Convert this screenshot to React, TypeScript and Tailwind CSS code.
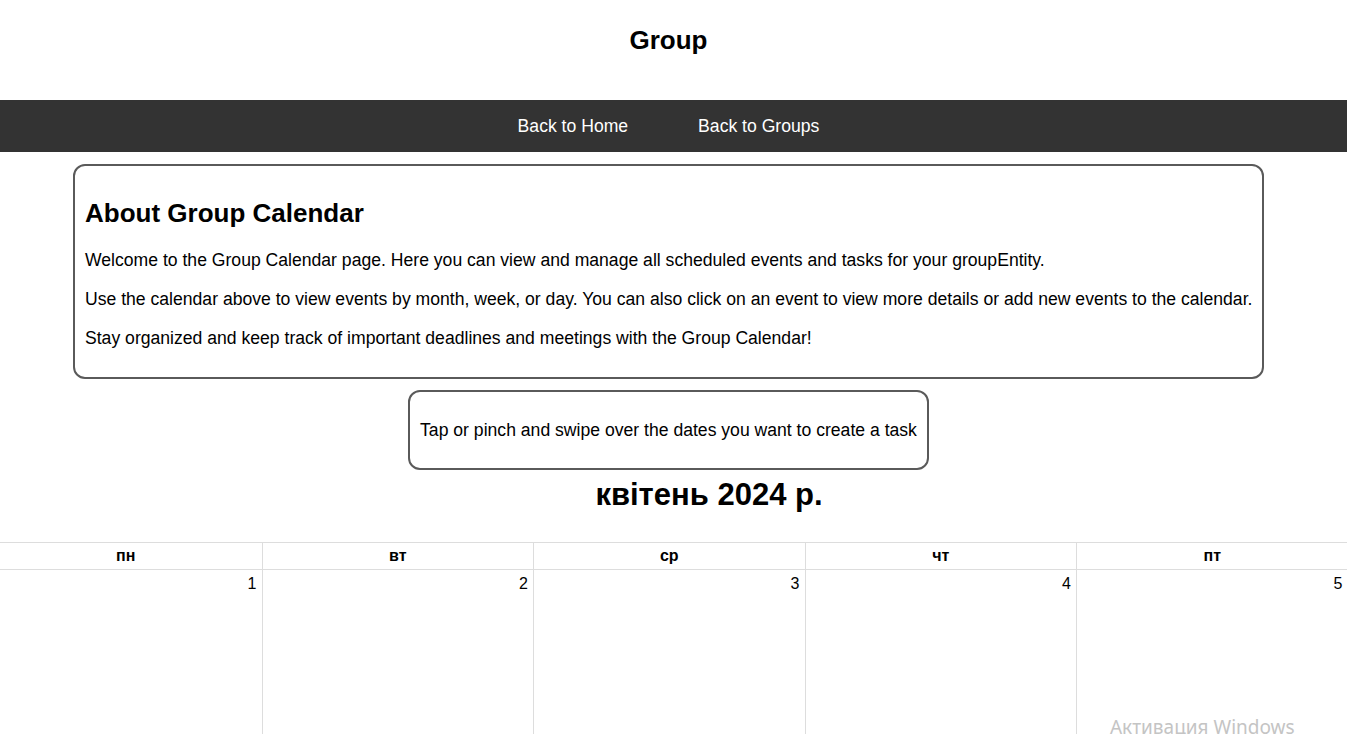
import React from "react";

const days = ["пн", "вт", "ср", "чт", "пт", "сб", "нд"];

export default function App() {
  return (
    <div className="relative w-[1347px] h-[734px] overflow-hidden bg-white text-black font-['Liberation_Sans',Arial,sans-serif]">
      <header className="w-[1337px] h-[100px] flex justify-center pt-[25px]">
        <h1 className="text-[26px] font-bold leading-[30px]">Group</h1>
      </header>
      <nav className="w-[1347px] h-[52px] bg-[#333333] text-white text-[17.6px]">
        <div className="w-[1337px] h-full flex items-center justify-center">
          <a className="px-[35px]">Back to Home</a>
          <a className="px-[35px]">Back to Groups</a>
        </div>
      </nav>
      <div className="w-[1337px]">
        <section className="mx-[73px] mt-[12px] border-2 border-[#5a5a5a] rounded-[12px] pl-[10px] pr-[6px] pt-[32px] pb-[10px] text-[17.6px] leading-[21px]">
          <h2 className="text-[26px] font-bold leading-[30px] mb-[22px]">About Group Calendar</h2>
          <p className="mb-[18px] whitespace-nowrap">
            Welcome to the Group Calendar page. Here you can view and manage all scheduled events and tasks for your groupEntity.
          </p>
          <p className="mb-[18px] whitespace-nowrap">
            Use the calendar above to view events by month, week, or day. You can also click on an event to view more details or add new events to the calendar.
          </p>
          <p className="mb-[18px] whitespace-nowrap">
            Stay organized and keep track of important deadlines and meetings with the Group Calendar!
          </p>
        </section>
        <div className="flex justify-center mt-[11px]">
          <div className="border-2 border-[#5a5a5a] rounded-[12px] px-[10px] py-[28px] text-[17.6px] leading-[20px] whitespace-nowrap">
            Tap or pinch and swipe over the dates you want to create a task
          </div>
        </div>
        <div className="flex justify-center pl-[81px] mt-[7px] h-[36px] items-center">
          <h2 className="text-[31px] font-bold leading-[36px]">квітень 2024 р.</h2>
        </div>
      </div>
      <div className="mt-[29px] w-[1347px] overflow-hidden">
        <div className="ml-[-10px] grid grid-cols-[repeat(7,271.5px)] w-max">
          {days.map((d, i) => (
            <div
              key={d}
              className={`h-[28px] border-t border-b border-[#dddddd] flex items-center justify-center text-[16px] font-bold ${i > 0 ? "border-l" : ""}`}
            >
              {d}
            </div>
          ))}
          {days.map((d, i) => (
            <div
              key={"c" + d}
              className={`h-[200px] border-[#dddddd] text-right pr-[5px] pt-[4px] text-[16px] leading-[20px] ${i > 0 ? "border-l" : ""}`}
            >
              {i + 1}
            </div>
          ))}
        </div>
      </div>
      <div className="absolute left-[1110px] top-[715px] text-[19px] text-[#c4c4c4] leading-[24px] font-['Noto_Sans',sans-serif]">
        Активация Windows
      </div>
    </div>
  );
}
